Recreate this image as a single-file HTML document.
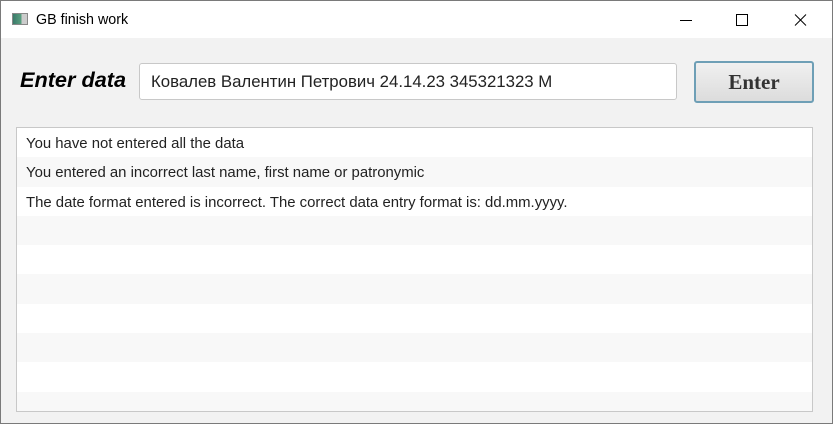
<!DOCTYPE html>
<html><head><style>
*{margin:0;padding:0;box-sizing:border-box}
body{width:833px;height:424px;overflow:hidden;background:#f2f2f2;font-family:"Liberation Sans",sans-serif;position:relative}
.win{position:absolute;left:0;top:0;width:833px;height:424px;border:1px solid #7a7a7a}
.title{position:absolute;left:1px;top:1px;width:831px;height:37px;background:#fff}
.title span{position:absolute;left:35px;top:11px;font-size:14.3px;color:#000}
.ico{position:absolute;left:11px;top:12px;width:16px;height:12px;background:linear-gradient(90deg,#3b7a6a,#5aa080 60%,#ccc 60%);border:1px solid #888}
.lbl{position:absolute;left:20px;top:67px;font-size:21.7px;font-weight:bold;font-style:italic}
.inp{position:absolute;left:139px;top:63px;width:538px;height:37px;background:#fff;border:1px solid #c8c8c8;border-radius:3px;font-size:16.8px;padding:8px 0 0 11px;color:#222;font-family:"Liberation Sans","Noto Sans CJK SC",sans-serif}
.btn{position:absolute;left:694px;top:61px;width:120px;height:42px;border:2px solid #6e9fb6;border-radius:3px;background:linear-gradient(#f0f0f0,#dcdcdc);font-family:"Liberation Serif",serif;font-weight:bold;font-size:21px;color:#333;text-align:center;line-height:38px}
.list{position:absolute;left:16px;top:127px;width:797px;height:285px;border:1px solid #c8c8c8;background:#fff;overflow:hidden}
.row{height:29.3px;font-size:14.9px;color:#222;padding:8px 0 0 9px}
.row:nth-child(even){background:#f8f8f8}
</style></head><body><div class="win"></div>
<div class="title"><div class="ico"></div><span>GB finish work</span>
<svg style="position:absolute;left:679px;top:12px" width="135" height="14"><path d="M0 7.5h12" stroke="#000"/><rect x="56.5" y="1.5" width="11" height="11" fill="none" stroke="#000"/><path d="M115 1.5l11 11M126 1.5l-11 11" stroke="#000"/></svg></div>
<div class="lbl">Enter data</div>
<div class="inp">Ковалев Валентин Петрович 24.14.23 345321323 М</div>
<div class="btn">Enter</div>
<div class="list">
<div class="row">You have not entered all the data</div>
<div class="row">You entered an incorrect last name, first name or patronymic</div>
<div class="row">The date format entered is incorrect. The correct data entry format is: dd.mm.yyyy.</div>
<div class="row"></div><div class="row"></div><div class="row"></div><div class="row"></div><div class="row"></div><div class="row"></div><div class="row"></div>
</div></body></html>
